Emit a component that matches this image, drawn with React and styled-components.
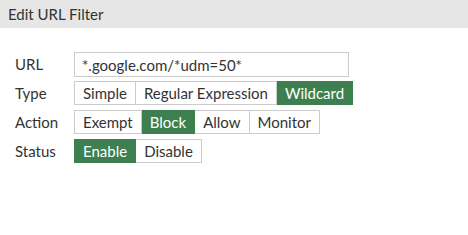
import React, { useState } from 'react';
import styled, { createGlobalStyle } from 'styled-components';

const GlobalStyle = createGlobalStyle`
  body {
    margin: 0;
    background: #ffffff;
    font-family: Lato, 'Noto Sans', sans-serif;
    color: #333333;
  }
`

const Panel = styled.div`
  width: 468px;
  height: 235px;
  background: #ffffff;
`

const Header = styled.div`
  height: 28px;
  display: flex;
  align-items: center;
  padding-left: 8px;
  background: #e6e6e6;
  font-size: 15px;
  color: #333333;
`

const Form = styled.div`
  display: grid;
  grid-template-columns: 59px auto;
  row-gap: 5px;
  align-items: center;
  justify-items: start;
  padding: 24px 0 0 15px;
`

const Label = styled.div`
  font-size: 15px;
  color: #333333;
`

const UrlInput = styled.input`
  box-sizing: border-box;
  width: 275px;
  height: 25px;
  margin-bottom: -1px;
  padding: 0 7px;
  border: 1px solid #cccccc;
  border-radius: 0;
  font-family: Lato, 'Noto Sans', sans-serif;
  font-size: 15px;
  color: #333333;
  outline: none;
`

const Segmented = styled.div`
  display: flex;
  height: 24px;
`

const Option = styled.button`
  box-sizing: border-box;
  height: 24px;
  padding: 0 8px;
  margin: 0;
  border: 1px solid ${p => (p.$active ? '#3d7f4e' : '#cccccc')};
  border-left-width: ${p => (p.$first ? '1px' : '0')};
  border-radius: 0;
  background: ${p => (p.$active ? '#3d7f4e' : '#ffffff')};
  color: ${p => (p.$active ? '#ffffff' : '#333333')};
  font-family: Lato, 'Noto Sans', sans-serif;
  font-size: 15px;
  cursor: pointer;
`

const Toggle = ({ options, value, onChange }) => (
    <Segmented>
        {options.map((o, i) => (
            <Option key={o} $first={i === 0} $active={o === value} onClick={() => onChange(o)}>
                {o}
            </Option>
        ))}
    </Segmented>
)

const App = () => {
    const [url, setUrl] = useState('*.google.com/*udm=50*')
    const [type, setType] = useState('Wildcard')
    const [action, setAction] = useState('Block')
    const [status, setStatus] = useState('Enable')

    return (
        <Panel>
            <GlobalStyle />
            <Header>Edit URL Filter</Header>
            <Form>
                <Label>URL</Label>
                <UrlInput value={url} onChange={e => setUrl(e.target.value)} />

                <Label>Type</Label>
                <Toggle options={['Simple', 'Regular Expression', 'Wildcard']} value={type} onChange={setType} />

                <Label>Action</Label>
                <Toggle options={['Exempt', 'Block', 'Allow', 'Monitor']} value={action} onChange={setAction} />

                <Label>Status</Label>
                <Toggle options={['Enable', 'Disable']} value={status} onChange={setStatus} />
            </Form>
        </Panel>
    );
}

export default App;
